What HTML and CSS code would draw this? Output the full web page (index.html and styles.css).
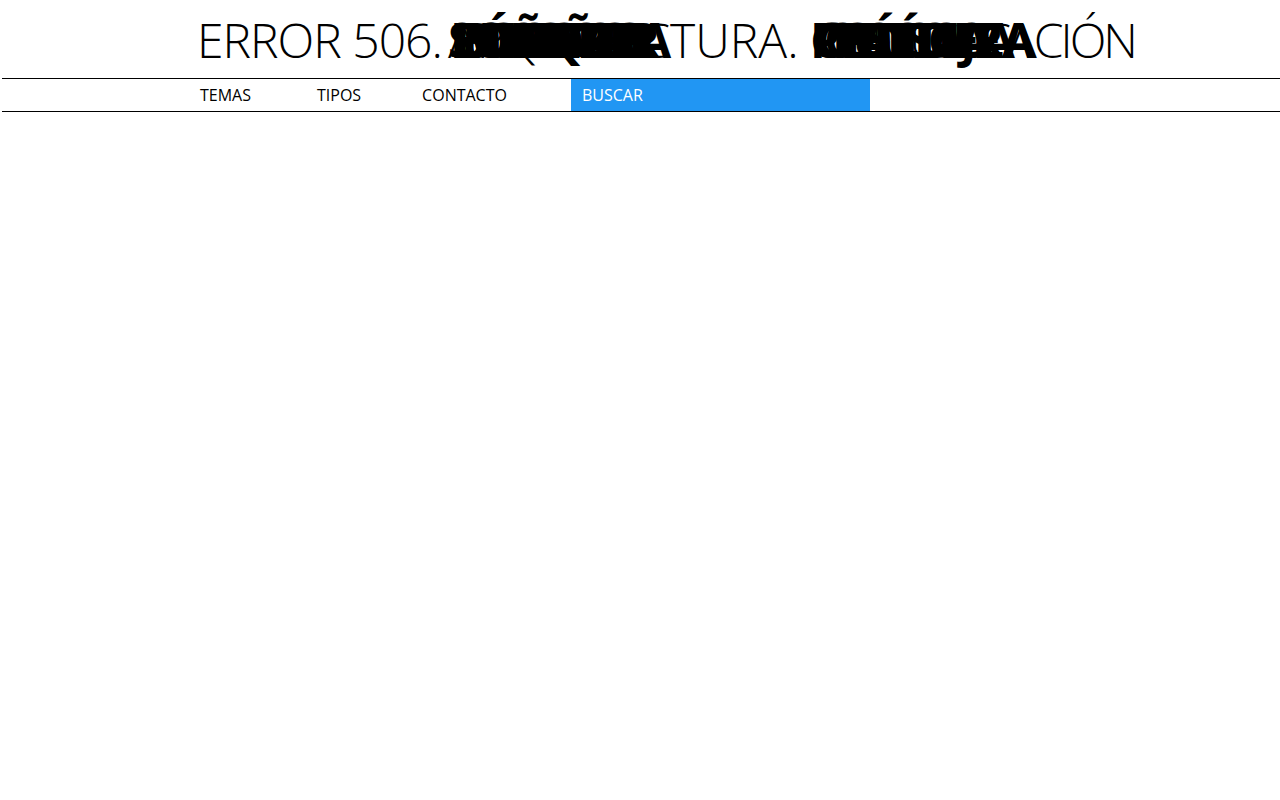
FILE: index.html
```html
<!DOCTYPE html>
<html lang="es">
<head>
<meta charset="utf-8">
<title>Error 506</title>
<link rel="stylesheet" href="styles.css">
</head>
<body>
<header class="masthead">
  <div class="wrap">
    <h1 class="title"><span class="lead">ERROR 506.</span><span class="rot rot-a"><span class="base">ARQUITECTURA.</span><span class="stack"><b>SOÑAR</b><b>BOSQUE</b><b>DISEÑO</b><b>CIUDAD</b><b>PÚBLICO</b><b>MORAR</b><b>HACER</b><b>TIERRA</b></span></span><span class="rot rot-b"><span class="base">COMUNICACIÓN</span><span class="stack"><b>POLÍTICA</b><b>CRÍTICA</b><b>CULTURA</b><b>PAISAJE</b><b>CIENCIA</b><b>ESCUELA</b></span></span></h1>
  </div>
</header>
<nav class="menu">
  <div class="wrap menu-row">
    <a class="item item-temas" href="#">TEMAS</a>
    <a class="item item-tipos" href="#">TIPOS</a>
    <a class="item item-contacto" href="#">CONTACTO</a>
    <div class="search">BUSCAR</div>
  </div>
</nav>
</body>
</html>
```
FILE: styles.css
```css
html, body {
  margin: 0;
  padding: 0;
  background: #fff;
  color: #000;
  font-family: "Open Sans", "Noto Sans", sans-serif;
}
.wrap {
  width: 880px;
  margin: 0 auto;
}
.masthead {
  height: 78px;
}
.title {
  display: flex;
  margin: 0;
  padding-top: 10px;
  margin-left: -3px;
  font-size: 48px;
  font-weight: 300;
  line-height: 60px;
  white-space: nowrap;
  letter-spacing: -1px;
}
.lead,
.rot {
  flex-shrink: 0;
}
.lead {
  width: 251px;
}
.rot {
  position: relative;
  display: block;
}
.rot-a {
  width: 362px;
}
.base {
  display: inline-block;
}
.rot-a .base {
  letter-spacing: 0;
}
.rot-b .base {
  letter-spacing: -3px;
}
.stack {
  position: absolute;
  left: 0;
  top: 0;
}
.stack b {
  position: absolute;
  left: 0;
  top: 0;
  font-weight: 700;
  letter-spacing: -2px;
  white-space: nowrap;
}
.stack b:nth-child(2) { left: 6px; }
.stack b:nth-child(3) { left: 14px; }
.stack b:nth-child(4) { left: 24px; }
.stack b:nth-child(5) { left: 2px; }
.stack b:nth-child(6) { left: 40px; }
.stack b:nth-child(7) { left: 54px; }
.stack b:nth-child(8) { left: 66px; }
.rot-b .stack b:nth-child(4) { left: 22px; }
.rot-b .stack b:nth-child(6) { left: 30px; }
.menu {
  margin-left: 2px;
  border-top: 1px solid #000;
  border-bottom: 1px solid #000;
  height: 32px;
}
.menu-row {
  display: flex;
  align-items: stretch;
  height: 32px;
}
.item {
  color: #000;
  text-decoration: none;
  font-size: 16px;
  line-height: 32px;
}
.item-temas { margin-left: -1px; }
.item-tipos { margin-left: 66px; }
.item-contacto { margin-left: 61px; }
.search {
  margin-left: 64px;
  width: 288px;
  padding-left: 11px;
  background: #2196f3;
  color: #fff;
  font-size: 16px;
  line-height: 32px;
}
```
